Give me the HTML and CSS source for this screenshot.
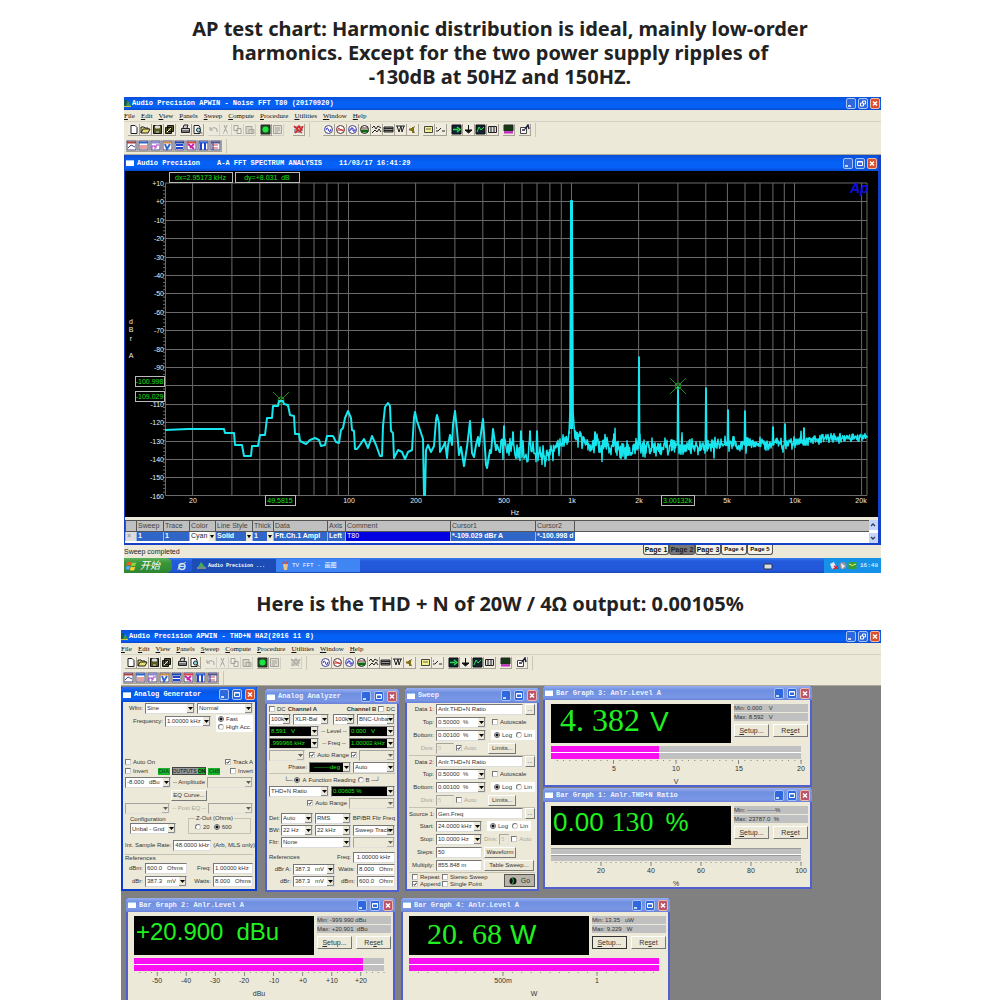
FILE: index.html
```
<!DOCTYPE html>
<html lang="en">
<head>
<meta charset="utf-8">
<meta name="viewport" content="width=device-width, initial-scale=1">
<title>AP test chart</title>
<link rel="stylesheet" href="styles.css">
</head>
<body>
<main>
<h1 class="caption">AP test chart: Harmonic distribution is ideal, mainly low-order<br>harmonics. Except for the two power supply ripples of<br>-130dB at 50HZ and 150HZ.</h1>

<section class="app app-fft">
  <header class="titlebar"><svg class="logo" viewBox="0 0 8 9"><path d="M0 1h3v7H0z" fill="#165a5a"/><path d="M4 2l3 5H2z" fill="#3c9a4a"/><path d="M0 7h7v1H0z" fill="#d8c040"/></svg><span>Audio Precision APWIN - Noise FFT T80 (20170920)</span><span class="winbtns"></span></header>
  <nav class="menu"></nav>
  <div class="toolbars"></div>
  <section class="child">
    <header class="titlebar child-title"><i class="docicon"></i><span>Audio Precision</span><span>A-A FFT SPECTRUM ANALYSIS</span><span>11/03/17 16:41:29</span><span class="winbtns"></span></header>
    <svg class="chart" viewBox="1 0 753 346" role="img" aria-label="FFT spectrum"></svg>
    <div class="tracegrid">
      <table class="traces">
        <colgroup><col class="c11"><col class="c27"><col class="c26"><col class="c26"><col class="c37"><col class="c21"><col class="c54"><col class="c18"><col class="c105"><col class="c85"><col class="c38"><col></colgroup>
        <thead><tr><th></th><th>Sweep</th><th>Trace</th><th>Color</th><th>Line Style</th><th>Thick</th><th>Data</th><th>Axis</th><th>Comment</th><th>Cursor1</th><th>Cursor2</th><th></th></tr></thead>
        <tbody>
          <tr><td class="face">×</td><td>1</td><td>1</td><td class="drop plain">Cyan</td><td class="drop">Solid</td><td class="drop">1</td><td>Fft.Ch.1 Ampl</td><td>Left</td><td class="comment">T80</td><td>*-109.029 dBr A</td><td>*-100.998 d</td><td class="rest"></td></tr>
        </tbody>
      </table>
      <div class="scroll"><button aria-label="Scroll up"><svg viewBox="0 0 8 8"><path d="M2 5l2-2 2 2" fill="none" stroke="#345" stroke-width="1.4"/></svg></button><button aria-label="Scroll down"><svg viewBox="0 0 8 8"><path d="M2 3l2 2 2-2" fill="none" stroke="#345" stroke-width="1.4"/></svg></button></div>
    </div>
  </section>
  <div class="status"><span>Sweep completed</span>
    <div class="pages"><button>Page 1</button><button class="on">Page 2</button><button>Page 3</button><button class="small">Page 4</button><button class="small">Page 5</button></div>
  </div>
  <footer class="taskbar">
    <button class="start"><svg viewBox="0 0 10 10"><path d="M1 2q2-1 4 0l-1 3q-2-1-4 0z" fill="#f05a28"/><path d="M5.500 2q2 1 4 0l-1 3q-2 1-4 0z" fill="#8fd13f"/><path d="M0 6q2-1 4 0L3 9q-2-1-3 0z" fill="#5aa6ff"/><path d="M4.500 6q2 1 4 0l-1 3q-2 1-4 0z" fill="#ffd02e"/></svg><span>开始</span></button>
    <svg class="ie" viewBox="0 0 10 10"><circle cx="5" cy="5.500" r="3" fill="none" stroke="#bfe6ff" stroke-width="1.500"/><path d="M2.500 5.500h5" stroke="#bfe6ff"/><path d="M1 9Q0 6 9 1" fill="none" stroke="#ffe08a" stroke-width=".8"/></svg>
    <button class="task dark"><svg viewBox="0 0 9 9"><path d="M4 1l4 5H1z" fill="#3fae5a"/><path d="M0 7h9" stroke="#e3c54a"/></svg>Audio Precision ...</button>
    <button class="task"><svg viewBox="0 0 9 9"><path d="M2 3h5L6 9H3z" fill="#e7c48c"/><path d="M2 3l1-3M5 3l2-3" stroke="#e0432f" stroke-width="1.500"/></svg>TV FFT - 画图</button>
    <svg class="kbd" viewBox="0 0 10 8"><rect x="1" y="2" width="8" height="5" rx="1" fill="#d8dde8" stroke="#334"/></svg>
    <div class="tray"><svg viewBox="0 0 28 9"><path d="M1 3l4-2 2 5-4 2z" fill="#e8e8f4"/><path d="M5 5l4 3M9 5L5 8" stroke="#d22" stroke-width="1.500"/><circle cx="14" cy="4.500" r="3.500" fill="#8b93a0"/><path d="M12 2l4 3-3 3z" fill="#eee"/><rect x="19.500" y="1" width="8" height="7" fill="#3d9e2e"/><path d="M20 3q3 3 7 0" stroke="#e6f27a" fill="none"/></svg><span>16:48</span></div>
  </footer>
</section>

<h2 class="caption second">Here is the THD + N of 20W / 4Ω output: 0.00105%</h2>

<section class="app app-thd">
  <header class="titlebar"><svg class="logo" viewBox="0 0 8 9"><path d="M0 1h3v7H0z" fill="#165a5a"/><path d="M4 2l3 5H2z" fill="#3c9a4a"/><path d="M0 7h7v1H0z" fill="#d8c040"/></svg><span>Audio Precision APWIN - THD+N HA2(2016 11 8)</span><span class="winbtns"></span></header>
  <nav class="menu"></nav>
  <div class="toolbars" data-idle="scope"></div>

  <div class="desktop">
    <section class="win w-gen active">
      <header class="titlebar"><i class="docicon"></i><span>Analog Generator</span><span class="winbtns"></span></header>
      <div class="panel">
        <div class="row"><span class="lb w18">Wfm:</span><select class="w50" aria-label="Waveform"><option>Sine</select><select class="grow" aria-label="Mode"><option>Normal</select></div>
        <div class="row top"><label class="row grow0"><span class="lb w42">Frequency:</span><select class="w46"><option>1.00000 kHz</select></label><div class="white stack"><label><input type="radio" name="acc" checked>Fast</label><label><input type="radio" name="acc">High Acc.</label></div></div>
        <div class="row low gap30"><label><input type="checkbox">Auto On</label><label class="end"><input type="checkbox" checked>Track A</label></div>
        <div class="row short"><label><input type="checkbox">Invert</label><button class="green end">CHA</button><button class="outputs">OUTPUTS <b>ON</b></button><button class="green">CHB</button><label class="end"><input type="checkbox">Invert</label></div>
        <div class="row"><select class="w46" aria-label="Amplitude A"><option>-8.000 &nbsp; dBu</select><span class="mid">-- Amplitude</span><select class="w46 off" aria-label="Amplitude B" disabled></select></div>
        <div class="row center"><button class="btn w36">EQ Curve...</button></div>
        <div class="row"><select class="w46 off" aria-label="Post EQ A" disabled></select><span class="mid dim">-- Post EQ --</span><select class="w46 off" aria-label="Post EQ B" disabled></select></div>
        <div class="row zrow"><label class="conf"><span>Configuration</span><select class="w46"><option>Unbal - Gnd</select></label><fieldset><legend>Z-Out (Ohms)</legend><label><input type="radio" name="z">20</label><label><input type="radio" name="z" checked>600</label></fieldset></div>
        <div class="row gap3"><label class="row grow0"><span class="lb">Int. Sample Rate:</span><input class="w38" value="48.0000 kHz"></label><span>(Arb, MLS only)</span></div>
        <div class="sep">References</div>
        <div class="row"><label class="row grow0"><span class="lb w18">dBm:</span><input class="w42i" value="600.0   Ohms"></label><label class="row grow"><span class="lb w22">Freq:</span><input class="grow" value="1.00000 kHz"></label></div>
        <div class="row"><label class="row grow0"><span class="lb w18">dBr:</span><select class="w42i"><option>387.3 &nbsp; mV</select></label><label class="row grow"><span class="lb w22">Watts:</span><input class="grow" value="8.000   Ohms"></label></div>
      </div>
    </section>

    <section class="win w-ana">
      <header class="titlebar"><i class="docicon"></i><span>Analog Analyzer</span><span class="winbtns"></span></header>
      <div class="panel tight">
        <div class="row short"><label><input type="checkbox">DC</label><b>Channel A</b><b class="end">Channel B</b><label><input type="checkbox">DC</label></div>
        <div class="row"><select class="w22" aria-label="Impedance A"><option>100k</select><select class="w36" aria-label="Input A"><option>XLR-Bal</select><select class="w22 end" aria-label="Impedance B"><option>100k</select><select class="w38" aria-label="Input B"><option>BNC-Unba</select></div>
        <div class="row"><select class="w50 lcd" aria-label="Level A"><option>8.591 &nbsp; V</select><span class="mid">-- Level --</span><select class="w46 lcd" aria-label="Level B"><option>0.000 &nbsp; V</select></div>
        <div class="row"><select class="w50 lcd" aria-label="Frequency A"><option>.999966 kHz</select><span class="mid">-- Freq --</span><select class="w46 lcd" aria-label="Frequency B"><option>1.00002 kHz</select></div>
        <div class="row"><select class="w36 off" aria-label="Range A" disabled></select><label class="end"><input type="checkbox" checked>Auto Range</label><input type="checkbox" checked aria-label="Auto range B"><select class="w36 off" aria-label="Range B" disabled></select></div>
        <div class="row"><span class="lb w38">Phase:</span><select class="w42i lcd rt" aria-label="Phase"><option>--------deg</select><select class="grow" aria-label="Phase mode"><option>Auto</select></div>
        <div class="row rule center"><span>└─</span><label><input type="radio" name="fr" checked>A</label><span>Function Reading</span><label><input type="radio" name="fr">B</label><span>─┘</span></div>
        <div class="row"><select class="w58" aria-label="Function"><option>THD+N Ratio</select><select class="w58 lcd" aria-label="Reading"><option>0.00605 %</select></div>
        <div class="row"><label class="end"><input type="checkbox" checked>Auto Range</label><select class="w46 off" aria-label="Function range" disabled></select></div>
        <div class="row gap3"><label class="row grow0"><span class="lb w10">Det:</span><select class="w32"><option>Auto</select></label><select class="w36" aria-label="Detector"><option>RMS</select><span class="end">BP/BR Fltr Freq</span></div>
        <div class="row"><label class="row grow0"><span class="lb w10">BW:</span><select class="w32"><option>22 Hz</select></label><select class="w36" aria-label="Bandwidth high"><option>22 kHz</select><select class="grow" aria-label="Filter frequency"><option>Sweep Track</select></div>
        <div class="row"><label class="row grow0"><span class="lb w10">Fltr:</span><select class="w70"><option>None</select></label><select class="grow off" aria-label="Filter value" disabled></select></div>
        <div class="row gap3"><span>References</span><label class="row end"><span>Freq:</span><input class="w42i" value=" 1.00000 kHz"></label></div>
        <div class="row"><label class="row grow0"><span class="lb w22">dBr A:</span><select class="w42i"><option>387.3 &nbsp; mV</select></label><label class="row end"><span>Watts:</span><input class="w38" value="8.000   Ohms"></label></div>
        <div class="row"><label class="row grow0"><span class="lb w22">dBr:</span><select class="w42i"><option>387.3 &nbsp; mV</select></label><label class="row end"><span>dBm:</span><input class="w38" value="600.0   Ohms"></label></div>
      </div>
    </section>

    <section class="win w-swp">
      <header class="titlebar"><i class="docicon"></i><span>Sweep</span><span class="winbtns"></span></header>
      <div class="panel loose">
        <div class="row"><label class="row grow"><span class="lb w26">Data <em>1:</em></span><input class="grow" value="Anlr.THD+N Ratio"></label><button class="btn w10">...</button></div>
        <div class="row"><label class="row grow0"><span class="lb w26">Top:</span><select class="w50"><option>0.50000 &nbsp;%</select></label><label class="gapl"><input type="checkbox">Autoscale</label></div>
        <div class="row"><label class="row grow0"><span class="lb w26">Bottom:</span><select class="w50"><option>0.00100 &nbsp;%</select></label><div class="white"><label><input type="radio" name="l1" checked>Log</label><label><input type="radio" name="l1">Lin</label></div></div>
        <div class="row"><label class="row grow0 dim"><span class="lb w26">Divs:</span><input class="w18 off" value="5" disabled></label><label class="dim"><input type="checkbox" checked disabled>Auto</label><button class="btn w28 lim">Limits...</button></div>
        <div class="row rule"><label class="row grow"><span class="lb w26">Data <em>2:</em></span><input class="grow" value="Anlr.THD+N Ratio"></label><button class="btn w10">...</button></div>
        <div class="row"><label class="row grow0"><span class="lb w26">Top:</span><select class="w50"><option>0.50000 &nbsp;%</select></label><label class="gapl"><input type="checkbox">Autoscale</label></div>
        <div class="row"><label class="row grow0"><span class="lb w26">Bottom:</span><select class="w50"><option>0.00100 &nbsp;%</select></label><div class="white"><label><input type="radio" name="l2" checked>Log</label><label><input type="radio" name="l2">Lin</label></div></div>
        <div class="row"><label class="row grow0 dim"><span class="lb w26">Divs:</span><input class="w18 off" value="5" disabled></label><label class="dim"><input type="checkbox" disabled>Auto</label><button class="btn w28 lim">Limits...</button></div>
        <div class="row rule"><label class="row grow"><span class="lb w26">Source <em>1:</em></span><input class="grow" value="Gen.Freq"></label><button class="btn w10">...</button></div>
        <div class="row"><label class="row grow0"><span class="lb w26">Start:</span><select class="w46"><option>24.0000 kHz</select></label><div class="white"><label><input type="radio" name="l3" checked>Log</label><label><input type="radio" name="l3">Lin</label></div></div>
        <div class="row"><label class="row grow0"><span class="lb w26">Stop:</span><select class="w46"><option>10.0000 Hz</select></label><label class="row dim"><span>Divs:</span><input class="w10 off" value="5" disabled></label><label class="dim"><input type="checkbox" disabled>Auto</label></div>
        <div class="row"><label class="row grow0"><span class="lb w26">Steps:</span><input class="w46" value="50"></label><button class="btn w32">Waveform</button></div>
        <div class="row"><label class="row grow0"><span class="lb w26">Multiply:</span><input class="w46" value="855.848 m"></label><button class="btn w50">Table Sweep...</button></div>
        <div class="row bottom"><div class="checks"><label><input type="checkbox">Repeat</label><label><input type="checkbox">Stereo Sweep</label><label><input type="checkbox" checked>Append</label><label><input type="checkbox">Single Point</label></div><button class="go"><svg viewBox="0 0 8 8"><circle cx="4" cy="4" r="3.500" fill="#111"/><path d="M3 1q3 3 0 6" stroke="#2a8a3a" fill="none" stroke-width="1.500"/></svg>Go</button></div>
      </div>
    </section>

    <section class="win bar w-b3">
      <header class="titlebar"><i class="docicon"></i><span>Bar Graph 3: Anlr.Level A</span><span class="winbtns"></span></header>
      <div class="meter">
        <output class="lcdbig b3"><span class="serif s32">4. 382</span><span class="s28">V</span></output>
        <div class="side"><p>Min: 0.000 &nbsp;&nbsp; V</p><p>Max: 8.592 &nbsp; V</p><div class="btns"><button class="btn"><u>S</u>etup...</button><button class="btn">Re<u>s</u>et</button></div></div>
        <div class="level" style="--v:43.2%"><i></i><i></i></div>
        <svg class="scale" viewBox="0 0 260 26" data-min="0" data-max="20" data-minor="0.5" data-labels="5,10,15,20" data-unit="V"></svg>
      </div>
    </section>
    <section class="win bar w-b1">
      <header class="titlebar"><i class="docicon"></i><span>Bar Graph 1: Anlr.THD+N Ratio</span><span class="winbtns"></span></header>
      <div class="meter">
        <output class="lcdbig b1"><span class="s26">0.00</span><span class="serif s28 near">130</span><span class="s26">%</span></output>
        <div class="side"><p>Min: --------------%</p><p>Max: 23787.0 &nbsp;%</p><div class="btns"><button class="btn"><u>S</u>etup...</button><button class="btn">Re<u>s</u>et</button></div></div>
        <div class="level empty" style="--v:0%"><i></i><i></i></div>
        <svg class="scale" viewBox="0 0 260 26" data-min="0" data-max="100" data-minor="2" data-labels="20,40,60,80,100" data-unit="%"></svg>
      </div>
    </section>
    <section class="win bar w-b2">
      <header class="titlebar"><i class="docicon"></i><span>Bar Graph 2: Anlr.Level A</span><span class="winbtns"></span></header>
      <div class="meter">
        <output class="lcdbig b2"><span class="s24">+20.900</span><span class="s24">dBu</span></output>
        <div class="side"><p>Min: -999.990 dBu</p><p>Max: +20.901 &nbsp;dBu</p><div class="btns"><button class="btn"><u>S</u>etup...</button><button class="btn">Re<u>s</u>et</button></div></div>
        <div class="level" style="--v:91.6%"><i></i><i></i></div>
        <svg class="scale" viewBox="0 0 260 26" data-min="-58" data-max="28" data-minor="2" data-labels="-50,-40,-30,-20,-10,+0,+10,+20" data-unit="dBu"></svg>
      </div>
    </section>
    <section class="win bar w-b4">
      <header class="titlebar"><i class="docicon"></i><span>Bar Graph 4: Anlr.Level A</span><span class="winbtns"></span></header>
      <div class="meter">
        <output class="lcdbig b4"><span class="serif s30">20. 68</span><span class="s28">W</span></output>
        <div class="side"><p>Min: 13.35 &nbsp; uW</p><p>Max: 9.229 &nbsp; W</p><div class="btns"><button class="btn focus"><u>S</u>etup...</button><button class="btn">Re<u>s</u>et</button></div></div>
        <div class="level" style="--v:100%"><i></i><i></i></div>
        <svg class="scale" viewBox="0 0 260 26" data-min="0" data-max="1.33" data-minor="0.05" data-labels="0.5:500m,1" data-unit="W"></svg>
      </div>
    </section>
  </div>
</section>
</main>
<script src="app.js"></script>
</body>
</html>
```
FILE: styles.css
```
* { box-sizing: border-box; }
body { margin: 0; background: #fff; color: #222; font: 6px/8px "Liberation Sans", Arial, sans-serif; overflow-x: hidden; }
main { display: flow-root; }
button, input, select { font: inherit; color: inherit; margin: 0; padding: 0; border-radius: 0; }
p { margin: 0; }
i { font-style: normal; }

.caption { margin: 17px 0 8px; text-align: center; font: 700 20px/24px "Noto Sans", sans-serif; color: #222; }
.caption.second { margin: 19px 0 14px; }

.app { background: #ece9d8; overflow: hidden; }
.app-fft { margin-left: 12.4%; width: 75.7%; --tool: 16px; }
.app-thd { margin-left: 12.1%; width: 76%; --tool: 15px; }

.titlebar { display: flex; align-items: center; gap: 3px; height: 13px; color: #fff; font: bold 7px/9px "Liberation Mono", monospace; background: linear-gradient(#0a50d8, #0560f4 40%, #0560f8 80%, #0a48c8); white-space: pre; }
.logo { width: 8px; height: 9px; margin-right: -3px; }
.docicon { width: 8px; height: 6px; background: #fff; border-top: 1px solid #9cf; margin-left: 1px; }
.child-title { height: 16px; }
.child-title span + span:not(.winbtns) { margin-left: 14px; }
.winbtns { display: flex; gap: 2px; margin-left: auto; padding-right: 1px; }
.winbtns button { width: 10px; height: 11px; border: 1px solid #a9c3f5; border-radius: 2px; background: #2f67dd; display: flex; }
.winbtns button:last-child { background: #dd4f2a; border-color: #f2b8a4; }
.winbtns svg { width: 8px; height: 9px; }

.menu { display: flex; gap: 6px; height: 12px; align-items: center; font: 7px/10px "Liberation Serif", serif; border-bottom: 1px solid #d5d2c2; }
.menu a { color: #111; text-decoration: none; }
.menu a::first-letter { text-decoration: underline; }
.toolbars { border-bottom: 1px solid #aca899; }
.tools { display: flex; height: var(--tool); align-items: center; padding-left: 2px; }
.group { display: flex; border-right: 1px solid #cbc7b4; height: 14px; align-items: center; padding: 0 4px 0 0; }
.group + .group { margin-left: 13px; }
.tb { width: 12px; height: 12px; border: solid; border-width: 0 1px 1px 0; border-color: #a5a294; background: #efecdf; display: flex; }
.tb svg { width: 11px; height: 11px; }
.tb.sp { margin-left: 4px; }
.tb.idle { opacity: .35; filter: grayscale(1); }
.tb.wide { margin-left: 9px; }
.group.first { padding-left: 2px; }

.child { border: solid #1740c8; border-width: 0 3px 2px 1px; background: #ece9d8; }
.chart { display: block; width: 100%; background: #000; border-top: 0; font: 7px "Liberation Sans", Arial, sans-serif; margin-bottom: 3px; }
.chart .grid path { fill: none; stroke: #6a6a6a; stroke-width: 1; }
.chart .axis { fill: #eee; }
.chart .cur text { fill: #18e018; }
.chart .cur rect { fill: #000; stroke: #bbb; }
.chart .trace { fill: none; stroke: #18e6ee; stroke-width: 2; stroke-linejoin: round; }
.chart .noise { stroke-width: 1.5; }
.chart .mark { fill: none; stroke: #1c8a1c; }
.chart .brand { fill: #1010e0; font-size: 14px; font-weight: bold; font-style: italic; }

.tracegrid { display: flex; height: 23px; background: #fff; overflow: hidden; font-size: 7px; }
.traces { flex: 1; min-width: 0; table-layout: fixed; border-collapse: collapse; height: 20px; align-self: flex-start; color: #fff; }
.traces th { height: 11px; padding: 0 1px; background: #c0c0c0; color: #444; font-weight: normal; text-align: left; border: solid #555; border-width: 1px 0 1px 1px; white-space: nowrap; overflow: hidden; line-height: 8px; }
.traces td { height: 9px; padding: 0 1px; background: #2f66c8; font-weight: bold; white-space: nowrap; overflow: hidden; line-height: 8px; border-left: 1px solid #9ab6e8; }
.traces .face { background: #ddd; color: #999; }
.traces .plain { background: #fff; color: #222; font-weight: normal; }
.traces .comment { background: #0000e0; font-weight: normal; }
.traces .rest { background: #fff; border: 0; }
.traces .drop { background-image: url("data:image/svg+xml,%3Csvg xmlns='http://www.w3.org/2000/svg' viewBox='0 0 6 9'%3E%3Cpath d='M0 0h6v9H0z' fill='%23ece9d8'/%3E%3Cpath d='M1 3h4L3 6z'/%3E%3C/svg%3E"); background-repeat: no-repeat; background-position: right center; background-size: 6px 9px; }
.c11 { width: 11px; } .c27 { width: 27px; } .c26 { width: 26px; } .c37 { width: 37px; } .c21 { width: 21px; } .c54 { width: 54px; }
.c18 { width: 18px; } .c105 { width: 105px; } .c85 { width: 85px; } .c38 { width: 38px; }
.scroll { width: 9px; display: flex; flex-direction: column; justify-content: space-between; }
.scroll button { width: 9px; height: 10px; border: 0; background: #c5d4f8; }
.scroll svg { display: block; width: 8px; height: 8px; }

.status { display: flex; height: 13px; align-items: center; font-size: 7px; }
.pages { display: flex; margin-left: auto; margin-right: 108px; align-self: flex-start; }
.pages button { width: 26px; height: 10px; border: 1px solid #555; border-top: 0; border-radius: 0 0 3px 3px; background: #f4f2e6; font: bold 7px/9px "Liberation Sans", Arial, sans-serif; color: #111; white-space: nowrap; }
.pages .on { background: #777; color: #222; }
.pages .small { font-size: 6px; }
.taskbar { display: flex; height: 15px; align-items: center; background: linear-gradient(#3d7cf0, #225bdc 20%, #2157d8 85%, #1a46b0); color: #fff; }
.start { width: 48px; height: 15px; border: 0; border-radius: 0 6px 6px 0; background: linear-gradient(#5fb35c, #3b973a 30%, #2f8530); display: flex; align-items: center; gap: 3px; padding-left: 2px; color: #fff; font: italic 10px/14px "Liberation Sans", "Noto Sans CJK SC", sans-serif; }
.start svg { width: 11px; height: 11px; }
.ie { width: 10px; height: 10px; margin: 0 5px; }
.task { width: 84px; height: 13px; border: 0; padding-left: 5px; display: flex; align-items: center; gap: 2px; text-align: left; background: #3f85f4; color: #fff; font: 6px/10px "Liberation Mono", "Noto Sans CJK SC", monospace; white-space: nowrap; }
.task.dark { background: #1c4cb6; font-weight: bold; font-size: 5px; }
.task svg { width: 9px; height: 9px; flex: none; }
.kbd { width: 10px; height: 8px; margin-left: auto; }
.tray { width: 57px; height: 15px; margin-left: 51px; padding-left: 5px; background: #1592e8; display: flex; align-items: center; gap: 3px; font: 6px/10px "Liberation Mono", monospace; }
.tray svg { width: 28px; height: 9px; }

.desktop { position: relative; height: 316px; background: #808080; overflow: hidden; }
.win { position: absolute; border: 2px solid #5060d0; border-top: 0; background: #ece9d8; }
.win .titlebar { height: 15px; margin: 0 -2px; padding: 0 1px; background: linear-gradient(#98aef0, #6f8fe0 30%, #7a97e6 80%, #6a80d8); border-radius: 3px 3px 0 0; color: #eef2ff; }
.win.active { border-color: #0a3ccc; }
.win.active .titlebar { background: linear-gradient(#2a70f4, #0558e6 30%, #0560f8 80%, #0a48c8); color: #fff; }
.win .winbtns { gap: 3px; }
.win:not(.active) .winbtns button:last-child { background: #b8546c; }
.w-gen { left: 0; top: 1px; width: 136px; height: 204px; }
.w-ana { left: 144px; top: 3px; width: 134px; height: 203px; }
.w-swp { left: 284px; top: 2px; width: 134px; height: 203px; }
.bar { width: 269px; height: 101px; }
.w-b3 { left: 422px; top: 0; }
.w-b1 { left: 422px; top: 102px; }
.w-b2 { left: 5px; top: 212px; height: 110px; }
.w-b4 { left: 280px; top: 212px; height: 110px; }
.bar .titlebar { height: 14px; }

.panel { display: flex; flex-direction: column; gap: 1px; padding: 0 2px; white-space: nowrap; color: #333; }
.row { display: flex; align-items: center; gap: 2px; height: 12px; }
.tight { gap: 0; padding-top: 1px; }
.tight .row .row { height: 11px; }
.row.top { align-items: flex-start; }
.row.short, .row.low { height: 8px; }
.gap30 { margin-top: 30px; }
.gap3 { margin-top: 3px; }
.row .end { margin-left: auto; }
.center { justify-content: center; }
.grow { flex: 1; min-width: 0; }
.grow0 { flex: none; }
.mid { flex: 1; text-align: center; }
.dim { color: #aaa699; }
.lb { text-align: right; flex: none; }
.lb em { color: #a02040; font-style: normal; }
.rule { border-top: 1px solid #c5c2b2; }
label { display: flex; align-items: center; gap: 2px; }
.gapl { margin-left: 4px; }
select, .panel input:not([type]) { appearance: none; height: 11px; border: 1px solid; border-color: #777 #ddd #ddd #777; background-color: #fff; padding: 0 1px; color: #333; min-width: 0; }
select { background-image: url("data:image/svg+xml,%3Csvg xmlns='http://www.w3.org/2000/svg' viewBox='0 0 7 9'%3E%3Cpath d='M0 0h7v9H0z' fill='%23ece9d8'/%3E%3Cpath d='M6.500 0v8.500H0' fill='none' stroke='%23888'/%3E%3Cpath d='M1 3h5L3.500 6z'/%3E%3C/svg%3E"); background-repeat: no-repeat; background-position: right center; background-size: 7px 9px; }
select.lcd { background-color: #000; color: #1fe01f; }
select.rt { text-align: right; padding-right: 10px; text-align-last: right; }
select.off, .panel input.off { background-color: #ece9d8; color: #aaa699; opacity: .6; }
.w10 { width: 10px; } .w18 { width: 18px; } .w22 { width: 22px; } .w26 { width: 25px; } .w28 { width: 28px; } .w32 { width: 32px; }
.w36 { width: 36px; } .w38 { width: 38px; } .w42 { width: 38px; } .w42i { width: 42px; } .w46 { width: 46px; } .w50 { width: 50px; } .w58 { width: 60px; } .w70 { width: 70px; }
.w58.lcd { flex: 1; }
input[type=checkbox], input[type=radio] { appearance: none; width: 6px; height: 6px; flex: none; border: 1px solid; border-color: #777 #ccc #ccc #777; background: #fff center/contain no-repeat; }
input[type=radio] { border-radius: 50%; }
input[type=radio]:checked { background: radial-gradient(#111 0 1px, #fff 2px); border-color: #666; }
input[type=checkbox]:checked { background-image: url("data:image/svg+xml,%3Csvg xmlns='http://www.w3.org/2000/svg' viewBox='0 0 6 6'%3E%3Cpath d='M1 3l1.500 2L5.500 1' fill='none' stroke='%23111' stroke-width='1.300'/%3E%3C/svg%3E"); }
.white { display: flex; align-items: center; gap: 4px; background: #fff; padding: 0 3px; height: 10px; margin-left: 3px; }
.white.stack { flex-direction: column; align-items: flex-start; gap: 0; height: 17px; flex: 1; padding: 0 2px; }
.btn { height: 11px; border: 1px solid; border-color: #fff #777 #777 #fff; background: #ece9d8; white-space: nowrap; line-height: 8px; }
.btn.w10 { line-height: 5px; }
.lim { margin-left: 10px; }
.green { width: 12px; height: 7px; border: 0; background: #1bb32b; color: #052; font-size: 5px; line-height: 7px; font-weight: bold; }
.outputs { height: 8px; border: 1px solid #444; background: #999; color: #111; font-size: 5px; line-height: 6px; }
.outputs b { background: #1bb32b; }
.zrow { height: 20px; align-items: flex-start; }
.conf { flex-direction: column; align-items: flex-start; gap: 0; margin-left: 5px; }
fieldset { flex: 1; display: flex; gap: 4px; margin: 0 2px 0 10px; padding: 1px 6px 2px; border: 1px solid #c5c2b2; min-width: 0; }
legend { padding: 0 1px; line-height: 7px; }
.sep { border-top: 1px solid #c5c2b2; margin-top: 2px; height: 7px; line-height: 7px; }
.bottom { border-top: 1px solid #c5c2b2; }
.loose > .bottom { height: 16px; }
.checks { display: grid; grid-template-columns: 30px 50px; padding-left: 3px; line-height: 7px; }
.go { width: 31px; height: 13px; margin-left: auto; border: 1px solid #555; background: #b8b5a8; font-size: 7px; display: flex; align-items: center; justify-content: center; gap: 4px; }
.go svg { width: 8px; height: 8px; }

.meter { display: grid; grid-template-columns: 180px 74px; column-gap: 3px; padding: 4px 0 0 6px; }
.lcdbig { height: 39px; background: #000; color: #20f020; display: flex; align-items: baseline; white-space: pre; line-height: 32px; font-family: "Liberation Sans", Arial, sans-serif; }
.serif { font-family: "Liberation Serif", serif; }
.s24 { font-size: 24px; } .s26 { font-size: 26px; } .s28 { font-size: 28px; } .s30 { font-size: 30px; } .s32 { font-size: 32px; }
.b3 { padding-left: 9px; gap: 10px; }
.b1 { padding-left: 2px; gap: 12px; }
.b1 .near { margin-left: -4px; }
.b2 { padding-left: 2px; gap: 13px; }
.b4 { padding: 2px 0 0 18px; gap: 8px; }
.side { display: flex; flex-direction: column; gap: 1px; color: #333; }
.side p { background: #c0c0c0; height: 8px; line-height: 8px; }
.btns { display: flex; gap: 4px; margin-top: 2px; }
.btns .btn { flex: 1; height: 13px; font-size: 7px; }
.btn.focus { border-color: #333; }
.level { grid-column: 1 / -1; width: 250px; margin-top: 3px; display: grid; gap: 1px; background: #fff; }
.level i { height: 6px; background: linear-gradient(#f810f0, #f810f0) no-repeat left / var(--v) 100% #c0c0c0; }
.level.empty i { border-top: 1px solid #999; }
.scale { grid-column: 1 / -1; width: 260px; height: 26px; font: 7px "Liberation Sans", Arial, sans-serif; fill: #333; }
.scale path { stroke: #888; fill: none; }
```
FILE: app.js
```
// Window buttons, menus and toolbars shared by both application windows.
const close = '<svg viewBox="0 0 8 9"><path d="M2 2.500l4 4M6 2.500l-4 4" stroke="#fff" stroke-width="1.500"/></svg>';
const max = '<svg viewBox="0 0 8 9"><path d="M1.500 2.500h5v4h-5zM1.500 3h5" fill="none" stroke="#fff"/></svg>';
const restore = '<svg viewBox="0 0 8 9"><path d="M1.500 4h3v3h-3zM3.500 4V2h3v3h-2" fill="none" stroke="#fff"/></svg>';
const min = '<svg viewBox="0 0 8 9"><path d="M1 7h3" stroke="#fff" stroke-width="1.500"/></svg>';
document.querySelectorAll('.winbtns').forEach(el => {
  const outer = el.closest('header').parentElement.classList.contains('app');
  el.innerHTML = [['Minimize', min], ['Maximize', outer ? restore : max], ['Close', close]]
    .map(([n, s]) => `<button aria-label="${n}">${s}</button>`).join('');
});
document.querySelectorAll('.menu').forEach(el => {
  el.innerHTML = 'File Edit View Panels Sweep Compute Procedure Utilities Window Help'.split(' ')
    .map(t => `<a href="#">${t}</a>`).join('');
});

const p = (d, s = '#222', f = 'none', w = 1) => `<path d="${d}" stroke="${s}" fill="${f}" stroke-width="${w}"/>`;
const ring = (s, inner) => `<circle cx="5.500" cy="5.500" r="4" fill="#fff" stroke="${s}"/>` + inner;
const win = (c, extra) => `<rect x="1" y="1" width="9" height="9" fill="#fff" stroke="#447"/>` + p('M1 2.500h9', c, 'none', 2) + extra;
const icons = {
  new: p('M3 1.500h4l2 2v6H3z', '#222', '#fff'),
  open: p('M1 9V3h3l1 1h3v1M1 9l2-4h7L8 9z', '#222', '#e8e070'),
  save: p('M1.500 1.500h8v8h-8z', '#111', '#565a20') + p('M3.500 2h4v2h-4z', '#ddd', '#ddd') + p('M4 8h3', '#ddd'),
  saveall: p('M3.500 1.500h6v6h-6zM1.500 3.500h6v6h-6z', '#111', '#565a20') + p('M3 8l4-4', '#eee'),
  print: p('M3 4l1-3h4L7 4M1.500 4.500h8v4h-8z', '#222', '#ccc') + p('M2 7h7', '#222'),
  preview: p('M2 1.500h5l1 2v6H2z', '#222', '#fff') + '<circle cx="6.500" cy="6" r="2" fill="#8de" stroke="#222"/>' + p('M8 7.500l2 2', '#222'),
  undo: p('M2 3v3h3M2 6q3-4 7-1v3'), cut: p('M4 1l3 7M7 1L4 8M3 9h1M7 9h1'),
  copy: p('M2 1.500h4v5H2zM5 4.500h4v5H5z', '#222', '#fff'), paste: p('M2 2.500h6v7H2zM5 5.500h5v4H5z', '#222', '#bbb'),
  run: p('M1 1h9v9H1z', '#222', '#264a2a') + '<circle cx="5.500" cy="5.500" r="3" fill="#1be83c"/>',
  report: p('M1.500 1.500h8v8h-8zM3 4h5M3 6h5M3 8h3', '#222', '#ccc'),
  scope: p('M1 3h9M1 6h9M1 8h6', '#447') + p('M1 2l3 3 2-3 2 4 2-4M2 9l3-3 4 3', '#d22', 'none', 1.5),
  gen: ring('#448', p('M3 6q1-4 2.500 0t2.500-1', '#22c')), ana: ring('#533', p('M3 4l5 3M2 6h7', '#c22')),
  dgen: ring('#448', p('M2 6h2V4h2v3h2V5', '#22c')), dana: ring('#222', p('M2 6h7v2H3z', '#161', '#161') + p('M2 4h7', '#622')),
  wave: p('M1 4l2-2 2 3 2-3 3 2M1 9l3-3 2 2 2-3 2 3'), dio: p('M1 3h9v5H1zM1 4.500h9M1 6.500h9', '#222', '#999'),
  bits: p('M1 2h9M2 2l2 6 2-6 1 6 2-6'), dcx: p('M3 5.500l5-3M3 5.500l5 3', '#664') + p('M2 5.500h4M6 3v6', '#886d10', 'none', 2),
  note: p('M1.500 2.500h8v6h-8z', '#444', '#f2f08a') + p('M3 5h5', '#664'), sw: p('M1 7h2l3-3M7 7h3M1 4h1', '#222'),
  go: p('M1 1h9v9H1z', '#111', '#123') + p('M2 5.500h5M6 3l3 2.500L6 8', '#2be04a', 'none', 1.5),
  down: p('M5.500 1v5M2 6h7L5.500 9z', '#111', '#111'), graph: p('M1 1h9v9H1z', '#111', '#123') + p('M2 8l2-5 2 3 3-3', '#2be04a'),
  table: p('M1.500 2.500h8v6h-8zM4 2v6M7 2v6', '#222', '#ddd'),
  meter: p('M1 1h9v6H1z', '#222', '#163a16') + p('M1 8.500h9', '#c2c', 'none', 2), help: p('M1.500 3.500h6v6h-6z', '#444', '#fff') + p('M3 6h3M6 5l3-4 1 4', '#224', 'none', 1.5),
  p1: win('#a44', p('M2 8l3-3 4 2', '#448')), p2: win('#36c', p('M2 6h7M2 8h7', '#c44')), p3: win('#88c', p('M2 9V6h3v3M6 8V5h3', '#a3c')),
  p4: win('#c84', p('M3 4l2 5 3-5', '#36c', 'none', 2)), p5: win('#24a', p('M2 5h7M2 8h7', '#24c', 'none', 2)),
  p6: win('#d44', p('M2 4l6 5M8 4L4 8', '#c2a', 'none', 2)), p7: win('#36d', p('M3 3v7M7 3v7', '#24c', 'none', 2)),
  p8: win('#558', p('M2 5h6M2 8h6', '#c44') + p('M3 3v7', '#33a'))
};
const idle = ['undo', 'cut', 'copy', 'paste', 'report'];
const rows = [
  ['new open save saveall | print preview | undo cut copy paste | run report || scope', 'gen ana dgen dana wave dio bits dcx | note sw | go down graph table | meter | help'],
  ['p1 p2 p3 p4 p5 p6 p7 p8']
];
document.querySelectorAll('.toolbars').forEach(el => {
  const off = idle.concat(el.dataset.idle || []);
  el.innerHTML = rows.map(r => '<div class="tools">' + r.map((g, i) => {
    let cls = '';
    const out = g.split(' ').map(n => {
      if (n === '|') { cls = ' sp'; return ''; }
      if (n === '||') { cls = ' wide'; return ''; }
      const b = `<button class="tb${cls}${off.includes(n) ? ' idle' : ''}" aria-label="${n}"><svg viewBox="0 0 11 11">${icons[n]}</svg></button>`;
      cls = '';
      return b;
    }).join('');
    return `<div class="group${r.length > 1 && !i ? ' first' : ''}">${out}</div>`;
  }).join('') + '</div>').join('');
});

// Spectrum chart: logarithmic frequency axis, 10 dB rows.
const X = f => 447.5 + 223 * Math.log10(f / 1000);
const Y = db => 12 + (10 - db) * 18.4 / 10;
let grid = 'M41.500 12V324.500H743V12H41.500';
for (const d of [10, 100, 1000, 10000]) for (let k = 1; k < 10; k++) {
  const f = d * k;
  if (f >= 20 && f <= 20000) grid += `M${X(f).toFixed(1)} 12V324`;
}
for (let db = 0; db > -160; db -= 10) grid += `M41 ${Math.round(Y(db)) + 0.5}H743`;
let tk = '';
for (let db = 8; db > -160; db -= 2) tk += `M39 ${Y(db).toFixed(1)}h3`;
let labels = '';
for (let db = 10; db >= -160; db -= 10) {
  if (db === -100) continue; // the cursor readout takes this place
  labels += `<text x="40" y="${Math.round(Y(db)) + 3}" text-anchor="end">${db >= 0 ? '+' : ''}${db}</text>`;
}
for (const [f, t] of [[20, '20'], [100, '100'], [200, '200'], [500, '500'], [1000, '1k'], [2000, '2k'], [5000, '5k'], [10000, '10k'], [19800, '20k']])
  labels += `<text x="${Math.round(X(f))}" y="332" text-anchor="middle">${t}</text>`;
labels += '<text x="391" y="344" text-anchor="middle">Hz</text>';
[['d', 153], ['B', 161], ['r', 170], ['A', 187]].forEach(([t, y]) => labels += `<text x="7" y="${y}" text-anchor="middle">${t}</text>`);

const low = '41,259 64,258 100,258 101,262 110,262 111,274 118,274 120,285 127,285 128,275 134,275 136,264 141,264 143,247 148,247 149,235 154,235 155,230 159,230 160,233 164,234 166,244 170,245 171,263 175,263 176,270 182,273 186,269 191,267 195,269 197,275 201,274 203,265 209,265 212,271 215,272 217,259 219,257 221,247 224,240 227,247 228,259 230,260 231,278 233,278 236,274 240,268 244,277 248,265 252,274 256,285 258,285 259,255 261,236 264,232 266,235 267,260 269,262 270,287 274,279 278,281 281,288 284,281 288,279 290,247 291,241 293,250 296,259 299,268 300,324 301,324 302,279 304,274 307,281 310,275 312,249 313,244 315,252 316,281 320,274 321,271 323,287 324,275 326,264 328,274 329,254 331,240 333,259 335,284 337,276 340,295 343,276 345,259 346,250 348,282 350,286 352,274 354,266 355,275 357,262 359,248 360,262 362,294 363,297 366,279 367,282 369,258 372,279 373,274 376,282';
const base = [[376, 277], [400, 279], [422, 284], [440, 272], [446, 262], [451, 262], [458, 271], [490, 275], [500, 279], [520, 277], [570, 276], [600, 273], [650, 273], [690, 269], [743, 265]];
const amp = [[376, 24], [420, 24], [445, 16], [460, 18], [500, 24], [560, 18], [620, 14], [680, 12], [743, 9]];
const lerp = (t, x) => {
  const i = Math.max(1, t.findIndex(q => q[0] >= x));
  const [a, b] = [t[i - 1], t[i]];
  return a[1] + (b[1] - a[1]) * (x - a[0]) / (b[0] - a[0]);
};
const peaks = [[380, 255], [389, 261], [397, 260], [406, 260], [413, 260], [471, 261], [490, 263], [515, 186], [554, 215], [582, 217], [604, 239], [621, 240], [649, 256], [661, 253], [680, 257]];
let seed = 9;
const rnd = () => (seed = (seed * 16807) % 2147483647) / 2147483647 - 0.5;
let pts = '376,282';
for (let x = 377; x <= 743; x++) {
  const pk = peaks.find(q => q[0] === x);
  if (x === 446) pts += ' 445,262 446,240 447,30 448,30 449,240 450,254';
  else if (x > 446 && x < 451) continue;
  else if (pk) pts += ` ${x - 0.7},274 ${x - 0.2},${pk[1]} ${x + 0.2},${pk[1]} ${x + 0.7},274`;
  else {
    const kick = rnd() > 0.38 ? 1.8 : 1;
    pts += ` ${x},${(lerp(base, x) + rnd() * lerp(amp, x) * kick).toFixed(1)}`;
    if (x > 410) pts += ` ${x + 0.5},${(lerp(base, x) + rnd() * lerp(amp, x) * 0.5).toFixed(1)}`;
  }
}
const box = (x, y, w, t) => `<rect x="${x}.5" y="${y}.5" width="${w}" height="10"/><text x="${x + w / 2}" y="${y + 8}" text-anchor="middle">${t}</text>`;
const mark = (x, y) => `<path class="mark" d="M${x - 8} ${y - 8}l16 16M${x + 8} ${y - 8}l-16 16"/><circle class="mark" cx="${x}" cy="${y}" r="3"/>`;
document.querySelector('.chart').innerHTML = `<g class="grid"><path d="${grid}"/><path d="${tk}"/></g><g class="axis">${labels}</g>
${mark(157, 229)}<polyline class="trace" points="${low}"/><polyline class="trace noise" points="${pts}"/><path class="trace" d="M446.500 258L447 30h1L448.500 258"/><path class="trace" d="M515 190V272M554 220V272"/>${mark(554, 215)}
<g class="cur">${box(45, 1, 63, 'dx=2.95173 kHz')}${box(111, 1, 64, 'dy=+8.031 &#160;dB')}${box(11, 205, 29, '-100.998')}${box(11, 220, 29, '-109.029')}${box(141, 324, 30, '49.5815')}${box(537, 324, 33, '3.00132k')}</g>
<text class="brand" x="726" y="22">Ap</text>`;

// Meter scales.
document.querySelectorAll('.scale').forEach(el => {
  const { min: a, max: b, minor, labels: l, unit } = el.dataset;
  const sx = v => (v - a) / (b - a) * 250;
  let d = '', t = '';
  for (let v = +a + +minor; v <= +b + 0.001; v += +minor) d += `M${sx(v).toFixed(1)} 1v1`;
  l.split(',').forEach(s => {
    const [v, n = s] = s.split(':');
    d += `M${sx(+v).toFixed(1)} 1v4`;
    t += `<text x="${Math.round(sx(+v))}" y="12" text-anchor="middle">${n}</text>`;
  });
  el.innerHTML = `<path d="${d}"/>${t}<text x="125" y="25" text-anchor="middle">${unit}</text>`;
});
```
